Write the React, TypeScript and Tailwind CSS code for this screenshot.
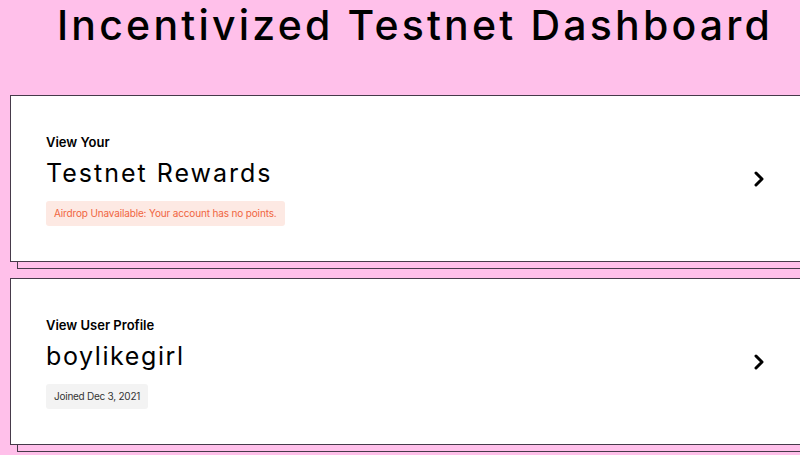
import React from "react";
import { ChevronRight } from "lucide-react";

function Card({
  label,
  title,
  titleClass,
  badge,
  badgeClass,
}: {
  label: string;
  title: string;
  titleClass: string;
  badge: string;
  badgeClass: string;
}) {
  return (
    <div className="relative w-[830px] h-[167px] shrink-0 bg-white border border-[#463a4a] shadow-[7px_7px_0_-1px_#ffc0ea,7px_7px_0_0_#463a4a] flex justify-between pl-[35px] pr-[68px]">
      <div className="pt-[38px] flex flex-col items-start">
        <div className="text-[13px] leading-[16px] font-semibold text-black">{label}</div>
        <div className={`mt-[8px] text-[25px] leading-[30px] text-black ${titleClass}`}>{title}</div>
        <div className={`mt-[13px] h-[25px] px-2 flex items-center rounded-[3px] text-[10px] tracking-[-0.15px] ${badgeClass}`}>
          {badge}
        </div>
      </div>
      <div className="self-center">
        <ChevronRight size={24} strokeWidth={3} className="text-black" />
      </div>
    </div>
  );
}

export default function App() {
  return (
    <div
      className="w-[800px] h-[455px] overflow-hidden bg-[#ffc0ea]"
      style={{ fontFamily: "Inter, 'Liberation Sans', sans-serif" }}
    >
      <h1 className="pl-[57px] pt-[5px] text-[41px] leading-none font-medium tracking-[3.2px] text-black whitespace-nowrap">
        Incentivized Testnet Dashboard
      </h1>
      <div className="pl-[10px] pt-[49px] flex flex-col gap-[16px]">
        <Card
          label="View Your"
          title="Testnet Rewards"
          titleClass="tracking-[2px]"
          badge="Airdrop Unavailable: Your account has no points."
          badgeClass="bg-[#fde9e3] text-[#f0653f]"
        />
        <Card
          label="View User Profile"
          title="boylikegirl"
          titleClass="tracking-[1.6px]"
          badge="Joined Dec 3, 2021"
          badgeClass="bg-[#f3f3f3] text-[#333333] tracking-[-0.25px]"
        />
      </div>
    </div>
  );
}
